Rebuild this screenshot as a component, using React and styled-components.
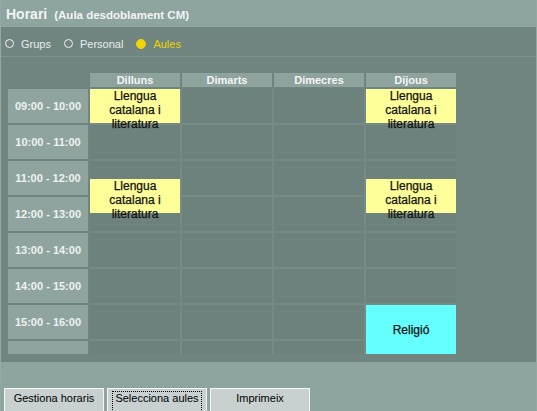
import React from "react";
import styled, { createGlobalStyle } from "styled-components";

const GlobalStyle = createGlobalStyle`
  html, body {
    margin: 0;
    padding: 0;
    overflow: hidden;
    background: #708580;
    font-family: "Liberation Sans", Arial, sans-serif;
  }
`;

const Window = styled.div`
  width: 537px;
  height: 411px;
  box-sizing: border-box;
  display: flex;
  flex-direction: column;
  border-left: 1px solid #93a8a3;
  border-right: 1px solid #93a8a3;
  background: #708580;
`;

const TitleBar = styled.div`
  height: 27px;
  box-sizing: border-box;
  padding: 1px 0 0 5px;
  line-height: 26px;
  background: #8ea49f;
  color: #f2f4f4;
  font-weight: bold;
  white-space: nowrap;
`;

const Title = styled.span`
  font-size: 14px;
`;

const Subtitle = styled.span`
  font-size: 11.5px;
  margin-left: 7px;
`;

const RadioBar = styled.div`
  height: 30px;
  box-sizing: border-box;
  padding: 4px 0 0 4px;
  display: flex;
  align-items: center;
  gap: 13px;
  border-bottom: 1px solid #7f948f;
`;

const Radio = styled.label`
  display: flex;
  align-items: center;
  gap: 7px;
  font-size: 11px;
  color: ${(p) => (p.$checked ? "#ecd400" : "#e8eeec")};
`;

const Dot = styled.span`
  width: ${(p) => (p.$checked ? "10px" : "9px")};
  height: ${(p) => (p.$checked ? "10px" : "9px")};
  box-sizing: border-box;
  border-radius: 50%;
  border: 1px solid ${(p) => (p.$checked ? "#f2d400" : "#f2f4f4")};
  background: ${(p) => (p.$checked ? "#f2d400" : "transparent")};
`;

const Body = styled.div`
  flex: 1;
  padding: 16px 0 0 7px;
`;

const Table = styled.div`
  display: grid;
  grid-template-columns: 80px 366px;
  grid-template-rows: 14px auto;
  gap: 2px;
`;

const DayHeaders = styled.div`
  display: grid;
  grid-template-columns: repeat(4, 90px);
  gap: 2px;
`;

const DayHeader = styled.div`
  background: #8ea39e;
  color: #f4f6f6;
  font-size: 11px;
  font-weight: bold;
  text-align: center;
  line-height: 14px;
`;

const Column = styled.div`
  display: flex;
  flex-direction: column;
  gap: 2px;
  position: relative;
`;

const TimeCell = styled.div`
  height: ${(p) => p.$h}px;
  background: #8fa49f;
  color: #eef2f1;
  font-size: 11px;
  font-weight: bold;
  display: flex;
  align-items: center;
  justify-content: center;
`;

const DaysArea = styled.div`
  display: grid;
  grid-template-columns: repeat(4, 90px);
  gap: 2px;
  background: #768b86;
`;

const Cell = styled.div`
  height: ${(p) => p.$h}px;
  background: #6d827d;
`;

const Event = styled.div`
  position: absolute;
  left: 0;
  right: 0;
  z-index: 1;
  box-sizing: border-box;
  display: flex;
  align-items: ${(p) => (p.$center ? "center" : "flex-start")};
  justify-content: center;
  text-align: center;
  background: ${(p) => p.$color};
  color: #111;
  font-size: 12px;
  line-height: 14px;
  -webkit-text-stroke: 0.25px #111;
`;

const ButtonBar = styled.div`
  height: 49px;
  box-sizing: border-box;
  padding: 26px 0 0 3px;
  display: flex;
  gap: 3px;
  background: #8ea49f;
`;

const Button = styled.div`
  width: 100px;
  height: 26px;
  box-sizing: border-box;
  padding-top: 2px;
  border: 1px solid #f4f6f6;
  background: #c8d0d0;
  display: flex;
  justify-content: center;
  align-items: flex-start;
  font-size: 11px;
  color: #000;
`;

const ButtonLabel = styled.span`
  padding: 0 2px 6px;
  line-height: 13px;
  border: 1px dotted ${(p) => (p.$focused ? "#000" : "transparent")};
`;

const days = ["Dilluns", "Dimarts", "Dimecres", "Dijous"];
const slots = [
  "09:00 - 10:00",
  "10:00 - 11:00",
  "11:00 - 12:00",
  "12:00 - 13:00",
  "13:00 - 14:00",
  "14:00 - 15:00",
  "15:00 - 16:00",
];
const rows = [...slots.map(() => 34), 13];
const PITCH = 36;

const events = [
  { day: 0, start: 9, height: 34, title: "Llengua catalana i literatura", color: "#ffff99" },
  { day: 0, start: 11.5, height: 34, title: "Llengua catalana i literatura", color: "#ffff99" },
  { day: 3, start: 9, height: 34, title: "Llengua catalana i literatura", color: "#ffff99" },
  { day: 3, start: 11.5, height: 34, title: "Llengua catalana i literatura", color: "#ffff99" },
  { day: 3, start: 15, height: 49, title: "Religió", color: "#66ffff", center: true },
];

const App = () => (
  <>
    <GlobalStyle />
    <Window>
      <TitleBar>
        <Title>Horari</Title>
        <Subtitle>(Aula desdoblament CM)</Subtitle>
      </TitleBar>
      <RadioBar>
        <Radio>
          <Dot />
          Grups
        </Radio>
        <Radio>
          <Dot />
          Personal
        </Radio>
        <Radio $checked>
          <Dot $checked />
          Aules
        </Radio>
      </RadioBar>
      <Body>
        <Table>
          <div />
          <DayHeaders>
            {days.map((d) => (
              <DayHeader key={d}>{d}</DayHeader>
            ))}
          </DayHeaders>
          <Column>
            {rows.map((h, i) => (
              <TimeCell key={i} $h={h}>
                {slots[i]}
              </TimeCell>
            ))}
          </Column>
          <DaysArea>
            {days.map((d, di) => (
              <Column key={d}>
                {rows.map((h, i) => (
                  <Cell key={i} $h={h} />
                ))}
                {events
                  .filter((e) => e.day === di)
                  .map((e, i) => (
                    <Event
                      key={i}
                      $color={e.color}
                      $center={e.center}
                      style={{ top: (e.start - 9) * PITCH, height: e.height }}
                    >
                      {e.title}
                    </Event>
                  ))}
              </Column>
            ))}
          </DaysArea>
        </Table>
      </Body>
      <ButtonBar>
        <Button>
          <ButtonLabel>Gestiona horaris</ButtonLabel>
        </Button>
        <Button>
          <ButtonLabel $focused>Selecciona aules</ButtonLabel>
        </Button>
        <Button>
          <ButtonLabel>Imprimeix</ButtonLabel>
        </Button>
      </ButtonBar>
    </Window>
  </>
);

export default App;
